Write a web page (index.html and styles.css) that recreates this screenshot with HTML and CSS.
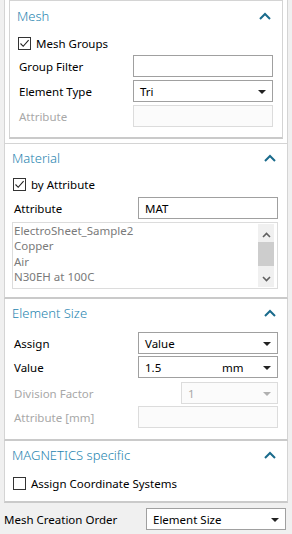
FILE: index.html
```html
<!DOCTYPE html>
<html lang="en">
<head>
    <meta charset="UTF-8">
    <title>Mesh Settings</title>
    <link rel="stylesheet" href="styles.css">
</head>
<body>
    <div class="frame">
        <div class="mesh">
            <div class="panel-head">
                <span class="panel-title">Mesh</span>
                <svg class="chevron" width="12" height="8" viewBox="0 0 12 8"><path d="M1 7 L6 2 L11 7" fill="none" stroke="#1a6b8c" stroke-width="2"/></svg>
            </div>
            <div class="check-row"><span class="check"><svg width="11" height="11" viewBox="0 0 11 11"><path d="M1.5 5.5 L4.2 8.3 L9.6 2.2" fill="none" stroke="#222" stroke-width="1.1"/></svg></span>Mesh Groups</div>
            <div class="row"><span class="label">Group Filter</span><div class="box"></div></div>
            <div class="row"><span class="label">Element Type</span><div class="box select">Tri<span class="arrow"></span></div></div>
            <div class="row"><span class="label off">Attribute</span><div class="box disabled"></div></div>
        </div>
    </div>

    <div class="panel material">
        <div class="panel-head">
            <span class="panel-title">Material</span>
            <svg class="chevron" width="12" height="8" viewBox="0 0 12 8"><path d="M1 7 L6 2 L11 7" fill="none" stroke="#1a6b8c" stroke-width="2"/></svg>
        </div>
        <div class="check-row"><span class="check"><svg width="11" height="11" viewBox="0 0 11 11"><path d="M1.5 5.5 L4.2 8.3 L9.6 2.2" fill="none" stroke="#222" stroke-width="1.1"/></svg></span>by Attribute</div>
        <div class="row"><span class="label">Attribute</span><div class="box">MAT</div></div>
        <div class="list">
            <div class="list-items">
                <div>ElectroSheet_Sample2</div>
                <div>Copper</div>
                <div>Air</div>
                <div>N30EH at 100C</div>
                <div>N30EH at 120C demag</div>
            </div>
            <div class="scroll">
                <svg width="9" height="6" viewBox="0 0 9 6"><path d="M1 5 L4.5 1.5 L8 5" fill="none" stroke="#606060" stroke-width="1.6"/></svg>
                <div class="thumb"></div>
                <svg class="down" width="9" height="6" viewBox="0 0 9 6"><path d="M1 1 L4.5 4.5 L8 1" fill="none" stroke="#606060" stroke-width="1.6"/></svg>
            </div>
        </div>
    </div>

    <div class="panel size">
        <div class="panel-head">
            <span class="panel-title">Element Size</span>
            <svg class="chevron" width="12" height="8" viewBox="0 0 12 8"><path d="M1 7 L6 2 L11 7" fill="none" stroke="#1a6b8c" stroke-width="2"/></svg>
        </div>
        <div class="row first"><span class="label">Assign</span><div class="box select">Value<span class="arrow"></span></div></div>
        <div class="row"><span class="label">Value</span><div class="box select">1.5<span class="unit">mm</span><span class="arrow"></span></div></div>
        <div class="row spaced"><span class="label off">Division Factor</span><div class="box select disabled short">1<span class="arrow"></span></div></div>
        <div class="row"><span class="label off">Attribute [mm]</span><div class="box disabled"></div></div>
    </div>

    <div class="panel magnetics">
        <div class="panel-head">
            <span class="panel-title">MAGNETICS specific</span>
            <svg class="chevron" width="12" height="8" viewBox="0 0 12 8"><path d="M1 7 L6 2 L11 7" fill="none" stroke="#1a6b8c" stroke-width="2"/></svg>
        </div>
        <div class="check-row"><span class="check"></span>Assign Coordinate Systems</div>
    </div>

    <div class="order-row">
        <span class="label">Mesh Creation Order</span>
        <div class="box select">Element Size<span class="arrow"></span></div>
    </div>
</body>
</html>
```

FILE: styles.css
```css
body {
    margin: 0;
    background-color: #f0f0f0;
    font-family: "Noto Sans", sans-serif;
    font-size: 11.5px;
    color: #000;
    width: 292px;
    height: 534px;
    overflow: hidden;
}

.frame {
    margin: 0 4px;
    height: 143px;
    background-color: #fff;
    border-left: 1px solid #d4d4d4;
    border-right: 1px solid #d4d4d4;
    border-bottom: 1px solid #d4d4d4;
}

.mesh {
    margin: 0 4px;
    height: 127px;
    padding: 0 9px 9px 7px;
    border-left: 1px solid #d4d4d4;
    border-right: 1px solid #d4d4d4;
    border-top: 1px solid #d4d4d4;
    border-bottom: 2px solid #cacaca;
}

.panel {
    margin: 0 4px;
    background-color: #fff;
    padding: 0 9px 0 7px;
    border-left: 1px solid #d4d4d4;
    border-right: 1px solid #d4d4d4;
    border-bottom: 2px solid #cacaca;
}

.panel-head {
    height: 30px;
    display: flex;
    align-items: center;
    justify-content: space-between;
}

.material .panel-head {
    height: 27px;
}

.size .panel-head,
.magnetics .panel-head {
    height: 28px;
}

.panel-title {
    font-size: 13px;
    font-weight: 300;
    color: #2785b0;
}

.chevron {
    margin-right: 2px;
}

.check-row {
    height: 22px;
    display: flex;
    align-items: center;
    gap: 5px;
    margin: 1px 0 1px 1px;
}

.material .check-row {
    margin: 2px 0 2px 1px;
}

.magnetics .check-row {
    margin: 3px 0 0 1px;
}

.check {
    width: 11px;
    height: 11px;
    border: 1px solid #333;
    display: flex;
}

.row {
    display: flex;
    align-items: center;
    justify-content: space-between;
    height: 22px;
    margin-bottom: 3px;
}

.size .row {
    margin-bottom: 2px;
}

.size .row.first {
    margin-top: 5px;
}

.size .row.spaced {
    margin-top: 4px;
}

.label {
    padding-left: 2px;
}

.label.off {
    color: #a8a8a8;
}

.box {
    border: 1px solid #a0a0a0;
    background-color: #fff;
    display: flex;
    align-items: center;
    padding-left: 6px;
    box-sizing: border-box;
    width: 140px;
    height: 22px;
    position: relative;
}

.box.disabled {
    border-color: #dcdcdc;
    background-color: #fbfbfb;
    color: #a8a8a8;
}

.box.short {
    width: 97px;
}

.select {
    padding-right: 20px;
}

.arrow {
    position: absolute;
    right: 6px;
    top: 9px;
    width: 0;
    height: 0;
    border-left: 4px solid transparent;
    border-right: 4px solid transparent;
    border-top: 4px solid #222;
}

.disabled .arrow {
    border-top-color: #b0b0b0;
}

.unit {
    position: absolute;
    left: 83px;
}

.list {
    height: 67px;
    margin-bottom: 8px;
    border: 1px solid #dcdcdc;
    display: flex;
    overflow: hidden;
    color: #7a7a7a;
    box-sizing: border-box;
}

.list-items {
    flex: 1;
    padding: 0 0 0 1px;
    line-height: 15.3px;
    white-space: nowrap;
    overflow: hidden;
}

.scroll {
    width: 16px;
    margin: 1px 3px 1px 0;
    background-color: #f0f0f0;
    display: flex;
    flex-direction: column;
    align-items: center;
    padding-top: 8px;
}

.thumb {
    width: 16px;
    height: 24px;
    background-color: #cdcdcd;
    margin-top: 4px;
}

.scroll .down {
    margin-top: 10px;
}

.size {
    padding-bottom: 9px;
}

.magnetics {
    padding-bottom: 7px;
}

.order-row {
    display: flex;
    align-items: center;
    justify-content: space-between;
    padding: 5px 6px 0 4px;
}

.order-row .label {
    padding-left: 0;
}
```
